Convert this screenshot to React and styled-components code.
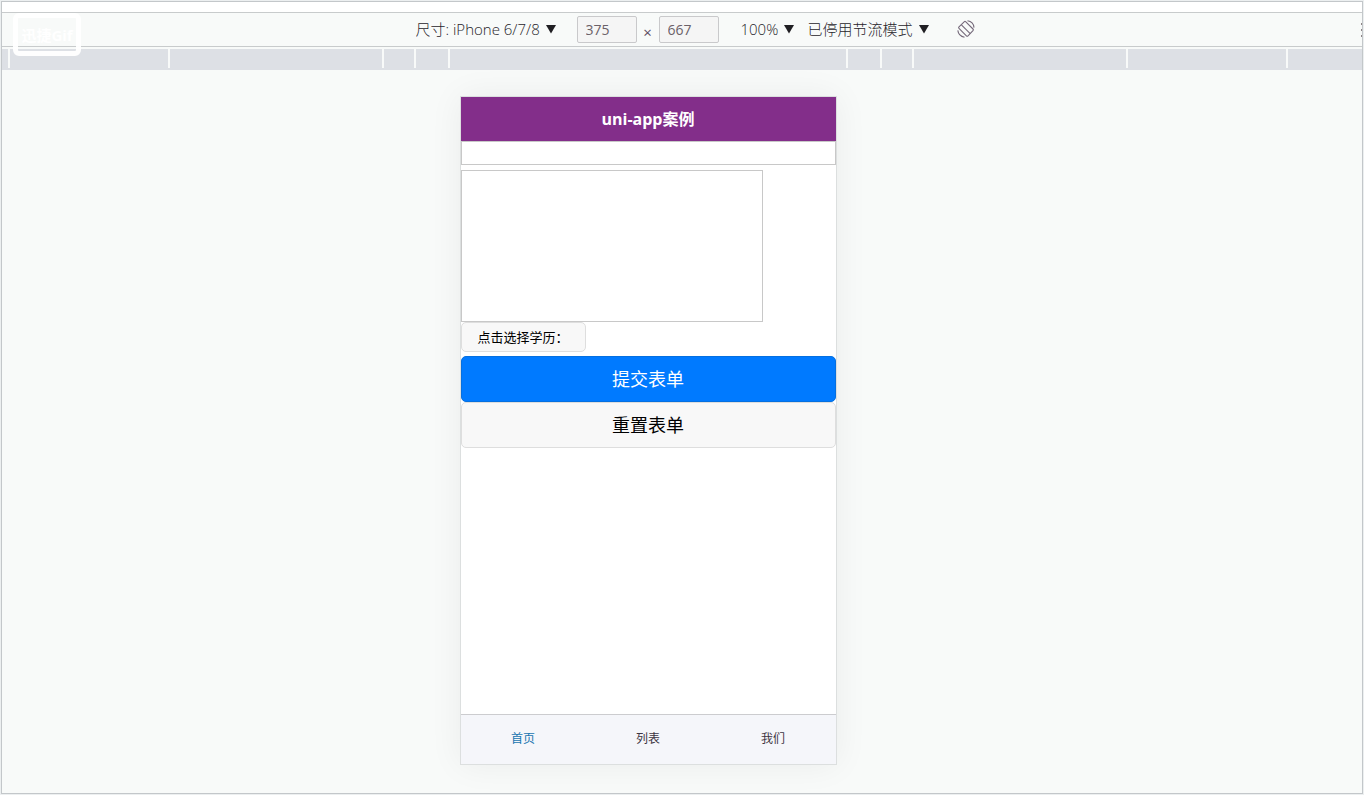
import React from "react";
import styled, { createGlobalStyle } from "styled-components";

const GlobalStyle = createGlobalStyle`
  * { box-sizing: border-box; }
  body { margin: 0; background: #eceff0; }
  body, button, input, textarea, select {
    font-family: "Open Sans", "Noto Sans CJK SC", sans-serif;
  }
`;

const Page = styled.div`
  min-height: 100vh;
  padding: 1px;
  display: flex;
`;

const Frame = styled.div`
  position: relative;
  flex: 1;
  min-width: 0;
  display: flex;
  flex-direction: column;
  border: 1px solid #c3c7ca;
  background: #f8faf9;
  overflow: hidden;
`;

const TopStrip = styled.div`
  height: 10px;
  background: #fff;
`;

const Toolbar = styled.header`
  display: grid;
  grid-template-columns: 1fr auto 1fr;
  align-items: center;
  height: 35px;
  padding-left: 26px;
  border: solid #c8cbcc;
  border-width: 1px 0;
`;

const Controls = styled.div`
  grid-column: 2;
  display: flex;
  align-items: center;
  color: #27252b;
  font-size: 15px;
  line-height: 20px;
`;

const Dropdown = styled.label`
  display: flex;
  align-items: center;
  gap: 5px;
  padding-bottom: 2px;
  margin-right: ${(p) => p.$after}px;
`;

const Select = styled.select`
  appearance: none;
  border: 0;
  padding: 0;
  background: transparent;
  color: inherit;
  font-size: 15px;
  font-weight: 300;
  line-height: 20px;
`;

const SizeInput = styled.input`
  width: 60px;
  height: 27px;
  padding: 0 8px;
  border: 1px solid #c9c9cb;
  border-radius: 2px;
  background: #f5f5f5;
  color: #6b6168;
  font-size: 14px;
`;

const Times = styled.span`
  width: 22px;
  padding-top: 4px;
  text-align: center;
  color: #5d4c62;
`;

const IconButton = styled.button`
  display: flex;
  padding: 0;
  border: 0;
  background: transparent;
`;

const RotateButton = styled(IconButton)`
  margin-left: 8px;
  padding-bottom: 2px;
`;

const MoreButton = styled(IconButton)`
  justify-self: end;
`;

const Ruler = styled.div`
  display: flex;
  justify-content: center;
  height: 21px;
  margin-top: 2px;
  padding-right: 68px;
  padding-bottom: 2px;
  background: #dde0e5;
`;

const Segment = styled.div`
  flex: none;
  width: ${(p) => p.$width}px;
  border-right: 2px solid #f8faf9;
  &:first-child { border-left: 2px solid #f8faf9; }
`;

const Stage = styled.main`
  flex: 1;
  display: flex;
  justify-content: center;
  align-items: flex-start;
  padding: 26px 68px 28px 0;
`;

const Phone = styled.section`
  width: 377px;
  min-height: 669px;
  display: flex;
  flex-direction: column;
  border: 1px solid #dcdfdf;
  background: #fff;
  box-shadow: 0 0 32px rgba(0, 0, 0, 0.06);
`;

const TitleBar = styled.h1`
  margin: 0;
  background: #832e8a;
  color: #fff;
  text-align: center;
  font-size: 16px;
  line-height: 44px;
  font-weight: 700;
`;

const Form = styled.form`
  flex: 1;
  display: flex;
  flex-direction: column;
  align-items: flex-start;
`;

const TextInput = styled.input`
  width: 100%;
  height: 24px;
  margin-bottom: 5px;
  border: 1px solid #c8c8c8;
  background: #fff;
`;

const TextArea = styled.textarea`
  width: 302px;
  height: 152px;
  border: 1px solid #c8c8c8;
  background: #fff;
  resize: none;
`;

const Button = styled.button`
  width: 100%;
  height: 46px;
  padding: 0;
  border: 1px solid ${(p) => (p.$primary ? "#0570e0" : "#dedede")};
  border-radius: 5px;
  background: ${(p) => (p.$primary ? "#007aff" : "#f8f8f8")};
  color: ${(p) => (p.$primary ? "#fff" : "#000")};
  font-size: 18px;
  line-height: 44px;
`;

const MiniButton = styled(Button)`
  width: auto;
  height: 30px;
  margin-bottom: 4px;
  padding: 0 16px;
  font-size: 13px;
  line-height: 28px;
`;

const TabBar = styled.nav`
  display: flex;
  height: 50px;
  border-top: 1px solid #cccccf;
  background: #f5f6fa;
`;

const Tab = styled.a`
  flex: 1;
  text-align: center;
  text-decoration: none;
  font-size: 12px;
  line-height: 48px;
  color: ${(p) => (p.$active ? "#1a75b0" : "#3d3542")};
`;

const Watermark = styled.div`
  position: absolute;
  top: 11px;
  left: 11px;
  width: 68px;
  height: 43px;
  border: 5px solid rgba(255, 255, 255, 0.95);
  border-radius: 6px;
  color: #fff;
  text-align: center;
  font-size: 15px;
  line-height: 34px;
  font-weight: 700;
`;

const Arrow = () => (
  <svg width="10" height="10" viewBox="0 0 10 10" aria-hidden="true">
    <path d="M0 1H10L5 9.5Z" fill="#201f23" />
  </svg>
);

function Picker({ label, value, after }) {
  return (
    <Dropdown $after={after}>
      <Select aria-label={label} defaultValue={value}>
        <option>{value}</option>
      </Select>
      <Arrow />
    </Dropdown>
  );
}

const SEGMENTS = [162, 214, 32, 34, 398, 34, 32, 214, 160];

export default function App() {
  return (
    <>
      <GlobalStyle />
      <Page>
        <Frame>
          <TopStrip />
          <Toolbar>
            <Controls>
              <Picker label="尺寸" value="尺寸: iPhone 6/7/8" after={21} />
              <SizeInput aria-label="宽度" defaultValue="375" />
              <Times>×</Times>
              <SizeInput aria-label="高度" defaultValue="667" />
              <Times />
              <Picker label="缩放" value="100%" after={14} />
              <Picker label="节流" value="已停用节流模式" after={20} />
              <RotateButton type="button" aria-label="旋转">
                <svg width="18" height="18" viewBox="0 0 18 18" fill="none" stroke="#75697a" strokeWidth="1.1">
                  <path d="M7.4 1.6Q8 1 8.6 1.6L16 9Q16.8 9.8 16 10.6L11 15.8Q10.2 16.6 9.4 15.8L2 8.4Q1.2 7.6 2 6.8Z" />
                  <path d="M4.4 4.8 13.2 13.6" />
                  <path d="M10.5 0.8Q16.4 1.6 17 7.6M0.8 10.4Q1.6 16.2 7.5 17.2" />
                </svg>
              </RotateButton>
            </Controls>
            <MoreButton type="button" aria-label="更多选项">
              <svg width="1" height="18" viewBox="0 0 1 18" fill="#8d8587">
                <path d="M0 2h1v2H0zM0 8h1v2H0zM0 14h1v2H0z" />
              </svg>
            </MoreButton>
          </Toolbar>
          <Ruler>
            {SEGMENTS.map((width, i) => (
              <Segment key={i} $width={width} />
            ))}
          </Ruler>
          <Stage>
            <Phone>
              <TitleBar>uni-app案例</TitleBar>
              <Form onSubmit={(e) => e.preventDefault()}>
                <TextInput aria-label="姓名" />
                <TextArea aria-label="简介" />
                <MiniButton type="button">点击选择学历：</MiniButton>
                <Button type="submit" $primary>提交表单</Button>
                <Button type="reset">重置表单</Button>
              </Form>
              <TabBar>
                <Tab href="#home" $active>首页</Tab>
                <Tab href="#list">列表</Tab>
                <Tab href="#about">我们</Tab>
              </TabBar>
            </Phone>
          </Stage>
          <Watermark>迅捷Gif</Watermark>
        </Frame>
      </Page>
    </>
  );
}
